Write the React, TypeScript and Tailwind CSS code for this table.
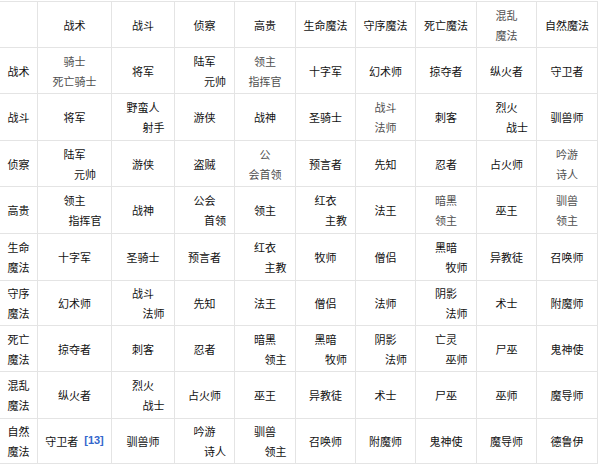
import React from "react";

type Cell =
  | string
  | { a: string; b: string; shift?: boolean; light?: boolean }
  | { sup: string; text: string };

const S = (a: string, b: string): Cell => ({ a, b, shift: true });
const C = (a: string, b: string): Cell => ({ a, b, light: true });

const rows: Cell[][] = [
  ["", "战术", "战斗", "侦察", "高贵", "生命魔法", "守序魔法", "死亡魔法", C("混乱", "魔法"), "自然魔法"],
  ["战术", C("骑士", "死亡骑士"), "将军", S("陆军", "元帅"), C("领主", "指挥官"), "十字军", "幻术师", "掠夺者", "纵火者", "守卫者"],
  ["战斗", "将军", S("野蛮人", "射手"), "游侠", "战神", "圣骑士", C("战斗", "法师"), "刺客", S("烈火", "战士"), "驯兽师"],
  ["侦察", S("陆军", "元帅"), "游侠", "盗贼", C("公", "会首领"), "预言者", "先知", "忍者", "占火师", C("吟游", "诗人")],
  ["高贵", S("领主", "指挥官"), "战神", S("公会", "首领"), "领主", S("红衣", "主教"), "法王", C("暗黑", "领主"), "巫王", C("驯兽", "领主")],
  [{ a: "生命", b: "魔法" }, "十字军", "圣骑士", "预言者", S("红衣", "主教"), "牧师", "僧侣", S("黑暗", "牧师"), "异教徒", "召唤师"],
  [{ a: "守序", b: "魔法" }, "幻术师", S("战斗", "法师"), "先知", "法王", "僧侣", "法师", S("阴影", "法师"), "术士", "附魔师"],
  [{ a: "死亡", b: "魔法" }, "掠夺者", "刺客", "忍者", S("暗黑", "领主"), S("黑暗", "牧师"), S("阴影", "法师"), S("亡灵", "巫师"), "尸巫", "鬼神使"],
  [{ a: "混乱", b: "魔法" }, "纵火者", S("烈火", "战士"), "占火师", "巫王", "异教徒", "术士", "尸巫", "巫师", "魔导师"],
  [{ a: "自然", b: "魔法" }, { text: "守卫者", sup: "[13]" }, "驯兽师", S("吟游", "诗人"), S("驯兽", "领主"), "召唤师", "附魔师", "鬼神使", "魔导师", "德鲁伊"],
];

function CellView({ c }: { c: Cell }) {
  if (typeof c === "string") {
    return <span className="leading-[20px]">{c}</span>;
  }
  if ("sup" in c) {
    return (
      <span className="leading-[20px]">
        {c.text}
        <sup className="ml-[6px] text-[11px] text-[#3366cc] font-['Liberation_Sans',sans-serif] font-semibold relative top-[-2px]">
          {c.sup}
        </sup>
      </span>
    );
  }
  return (
    <div className={`flex flex-col items-center leading-[20px] ${c.light ? "text-[#505050]" : ""}`}>
      <span>{c.a}</span>
      <span className={c.shift ? "pl-[21px]" : ""}>{c.b}</span>
    </div>
  );
}

export default function App() {
  return (
    <div className="w-[600px] h-[466px] bg-white font-['Noto_Sans_CJK_SC',sans-serif] text-[11px] text-[#111]">
      <div className="mt-px w-[598px] grid grid-cols-[37px_73px_62px_59px_60px_59px_59px_60px_59px_60px] grid-rows-[45px_45px_46px_45px_46px_46px_44px_45px_46px_44px] gap-px bg-[#e4e4e4] pt-px pr-px pb-px">
        {rows.map((r, ri) =>
          r.map((c, ci) => (
            <div key={`${ri}-${ci}`} className="bg-white flex items-center justify-center text-center">
              <CellView c={c} />
            </div>
          ))
        )}
      </div>
    </div>
  );
}
